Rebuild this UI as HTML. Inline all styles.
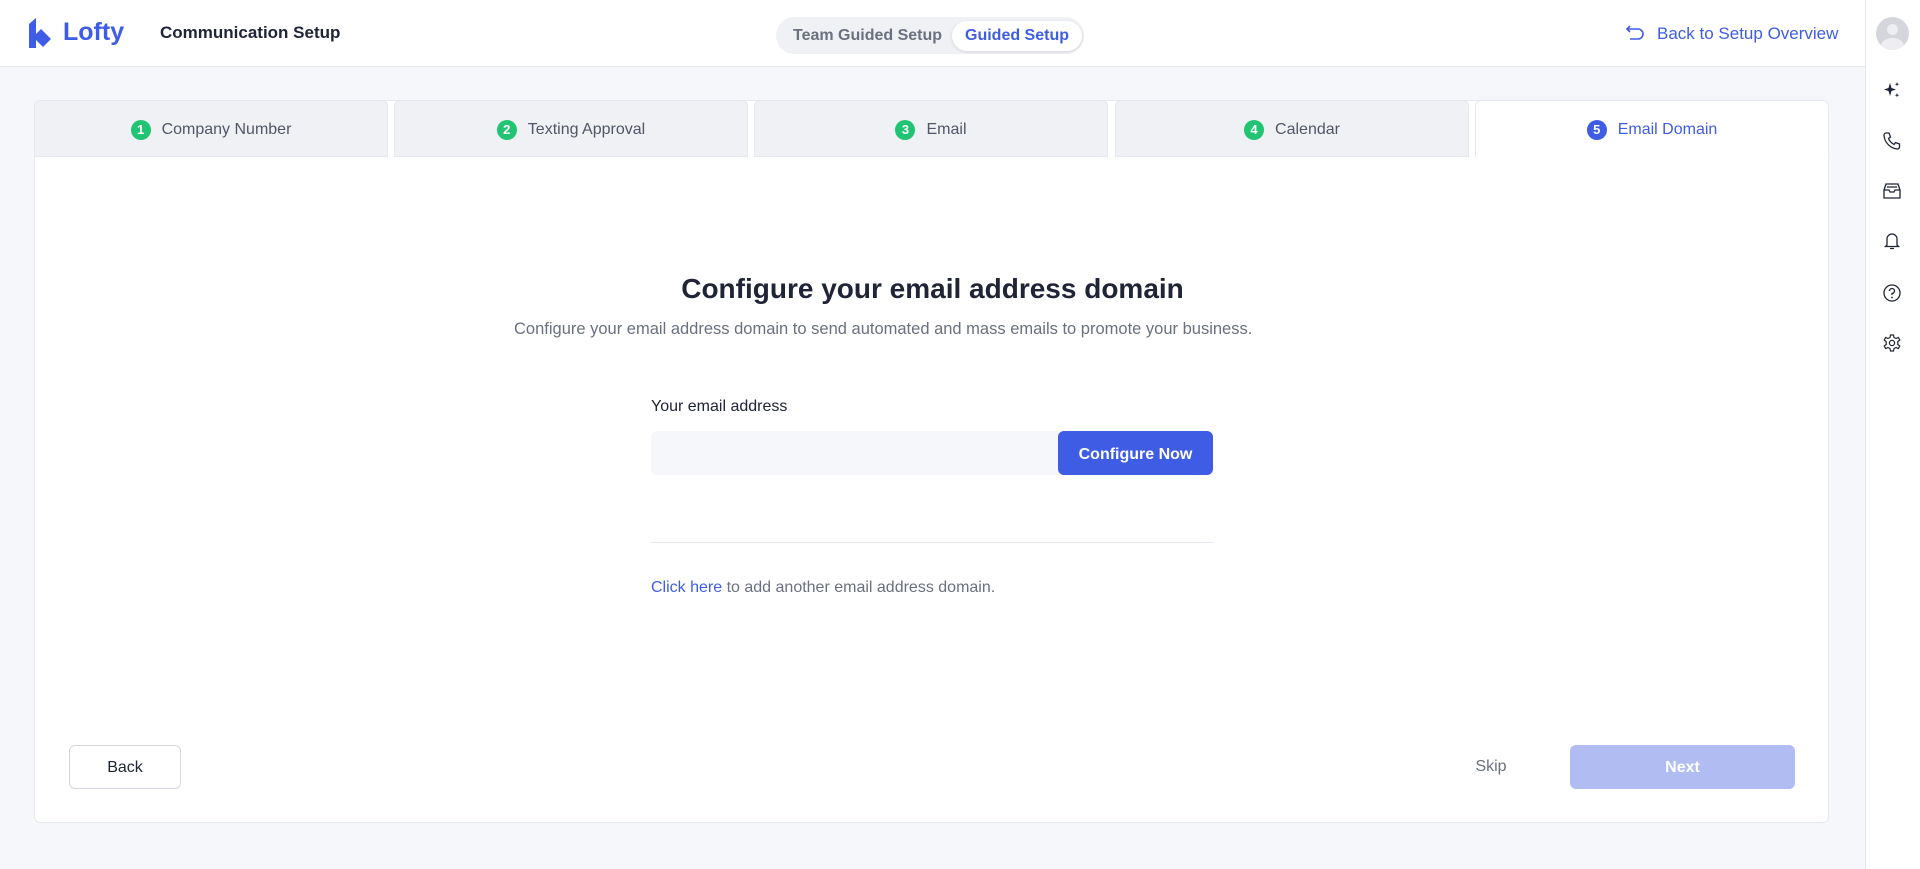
<!DOCTYPE html>
<html><head><meta charset="utf-8"><style>
*{box-sizing:border-box;margin:0;padding:0}
body{width:1920px;height:869px;overflow:hidden;background:#f6f7fb;font-family:"Liberation Sans",Arial,sans-serif;color:#202437;position:relative}
.hdr{position:absolute;left:0;top:0;width:1865px;height:67px;background:#fff;border-bottom:1px solid #e6e8ef}
.side{position:absolute;right:0;top:0;width:55px;height:869px;background:#fff;border-left:1px solid #e6e8ef}
.abs{position:absolute}
.card{position:absolute;left:34px;top:100px;width:1795px;height:723px;background:#fff;border:1px solid #e6e8ef;border-radius:6px}
.tab{position:absolute;top:100px;height:57px;width:354px;background:#f0f1f5;border:1px solid #e6e8ef;border-radius:6px 6px 0 0;display:flex;align-items:center;justify-content:center;font-size:16px;color:#515666;padding-top:2px}
.tab .n{width:20px;height:20px;border-radius:50%;background:#20c472;color:#fff;font-size:13px;font-weight:bold;display:inline-flex;align-items:center;justify-content:center;margin-right:11px}
.ic{position:absolute;left:1882px}
</style></head><body>
<div class="hdr"></div>
<svg class="abs" style="left:29px;top:18px" width="22" height="30" viewBox="0 0 22 30"><path d="M0 6 L7 0 V16 L12 11 L22 21 L14 29 L7 22 V30 H0Z" fill="#3f5ce5"/></svg>
<div class="abs" style="left:63px;top:18px;font-size:25px;font-weight:bold;color:#3f5ce5">Lofty</div>
<div class="abs" style="left:160px;top:23px;font-size:17px;font-weight:bold;color:#202437">Communication Setup</div>
<div class="abs" style="left:776px;top:17px;width:308px;height:37px;background:#f0f1f5;border-radius:19px"></div>
<div class="abs" style="left:793px;top:27px;font-size:16px;font-weight:bold;color:#6b7080">Team Guided Setup</div>
<div class="abs" style="left:952px;top:21px;width:130px;height:30px;background:#fff;border-radius:15px;box-shadow:0 1px 3px rgba(0,0,0,.12);font-size:16px;font-weight:bold;color:#3f5ce5;text-align:center;line-height:30px">Guided Setup</div>
<svg class="abs" style="left:1625px;top:24px" width="20" height="18" viewBox="0 0 20 18"><path d="M5 2 L2 5 L5 8 M2 5 H13 A5 5 0 0 1 13 15 H5" fill="none" stroke="#3f5ce5" stroke-width="1.6"/></svg>
<div class="abs" style="left:1657px;top:24px;font-size:17px;color:#3f5ce5">Back to Setup Overview</div>
<div class="side"></div>
<div class="abs" style="left:1876px;top:17px;width:33px;height:33px;border-radius:50%;background:#d5d6dc;overflow:hidden"><div style="position:absolute;left:11px;top:7px;width:11px;height:11px;border-radius:50%;background:#eeeef2"></div><div style="position:absolute;left:5px;top:21px;width:23px;height:16px;border-radius:50%;background:#eeeef2"></div></div>
<svg class="ic" style="top:80px" width="20" height="20" viewBox="0 0 20 20"><path d="M8 3 L9.5 8 L14 9.5 L9.5 11 L8 16 L6.5 11 L2 9.5 L6.5 8Z M15 2 l.6 1.6 1.6.6-1.6.6-.6 1.6-.6-1.6-1.6-.6 1.6-.6z M15 13 l.6 1.6 1.6.6-1.6.6-.6 1.6-.6-1.6-1.6-.6 1.6-.6z" fill="#202437"/></svg>
<svg class="ic" style="top:131px" width="20" height="20" viewBox="0 0 20 20"><path d="M4 2 L7 2 L8.5 6 L6.5 7.5 C7.5 10 9.5 12 12 13.5 L13.5 11.5 L17.5 13 V16 C17.5 17 16.5 18 15.5 18 C8.5 17.5 2.5 11.5 2 4.5 C2 3 3 2 4 2Z" fill="none" stroke="#202437" stroke-width="1.3"/></svg>
<svg class="ic" style="top:181px" width="20" height="20" viewBox="0 0 20 20"><path d="M2 9 L4 3 H16 L18 9 V17 H2Z M2 9 H7 L8 11 H12 L13 9 H18 M5 6 H15" fill="none" stroke="#202437" stroke-width="1.3"/></svg>
<svg class="ic" style="top:231px" width="20" height="20" viewBox="0 0 20 20"><path d="M5 14 V8 A5 5 0 0 1 15 8 V14 L16.5 15.5 H3.5Z M8 17.5 H12" fill="none" stroke="#202437" stroke-width="1.3"/></svg>
<svg class="ic" style="top:283px" width="20" height="20" viewBox="0 0 20 20"><circle cx="10" cy="10" r="8" fill="none" stroke="#202437" stroke-width="1.3"/><path d="M7.5 8 A2.5 2.5 0 1 1 10 10.5 V12" fill="none" stroke="#202437" stroke-width="1.3"/><circle cx="10" cy="14.5" r=".9" fill="#202437"/></svg>
<svg class="ic" style="top:333px" width="20" height="20" viewBox="0 0 20 20"><path d="M8.5 2 H11.5 L12 4.5 L14 5.5 L16.3 4.4 L17.8 7 L15.8 8.6 V11.4 L17.8 13 L16.3 15.6 L14 14.5 L12 15.5 L11.5 18 H8.5 L8 15.5 L6 14.5 L3.7 15.6 L2.2 13 L4.2 11.4 V8.6 L2.2 7 L3.7 4.4 L6 5.5 L8 4.5Z" fill="none" stroke="#202437" stroke-width="1.2"/><circle cx="10" cy="10" r="2.6" fill="none" stroke="#202437" stroke-width="1.2"/></svg>
<div class="card"></div>
<div class="tab" style="left:34px"><span class="n">1</span>Company Number</div>
<div class="tab" style="left:394px"><span class="n">2</span>Texting Approval</div>
<div class="tab" style="left:754px"><span class="n">3</span>Email</div>
<div class="tab" style="left:1115px"><span class="n">4</span>Calendar</div>
<div class="tab" style="left:1475px;background:#fff;border-bottom-color:#fff;color:#3f5ce5"><span class="n" style="background:#3f5ce5">5</span>Email Domain</div>
<div class="abs" style="left:0;width:1865px;top:273px;text-align:center;font-size:28px;font-weight:bold;color:#202437">Configure your email address domain</div>
<div class="abs" style="left:514px;top:320px;font-size:16.5px;color:#6b7080;white-space:nowrap">Configure your email address domain to send automated and mass emails to promote your business.</div>
<div class="abs" style="left:651px;top:398px;font-size:16px;color:#202437">Your email address</div>
<div class="abs" style="left:651px;top:431px;width:409px;height:44px;background:#f6f7fb;border-radius:6px 0 0 6px"></div>
<div class="abs" style="left:1058px;top:431px;width:155px;height:44px;background:#3f5ce5;border-radius:6px;color:#fff;font-size:16px;font-weight:bold;text-align:center;line-height:44px;padding-top:2px">Configure Now</div>
<div class="abs" style="left:651px;top:542px;width:562px;height:1px;background:#e6e8ef"></div>
<div class="abs" style="left:651px;top:579px;font-size:16px;color:#6b7080"><span style="color:#3f5ce5">Click here</span> to add another email address domain.</div>
<div class="abs" style="left:69px;top:745px;width:112px;height:44px;border:1px solid #d5d7de;border-radius:6px;background:#fff;text-align:center;line-height:44px;font-size:16px;color:#202437">Back</div>
<div class="abs" style="left:1460px;top:758px;width:62px;text-align:center;font-size:16px;color:#6b7080">Skip</div>
<div class="abs" style="left:1570px;top:745px;width:225px;height:44px;background:#b1bdf2;border-radius:6px;color:#fff;font-size:16px;font-weight:bold;text-align:center;line-height:46px">Next</div>
</body></html>
